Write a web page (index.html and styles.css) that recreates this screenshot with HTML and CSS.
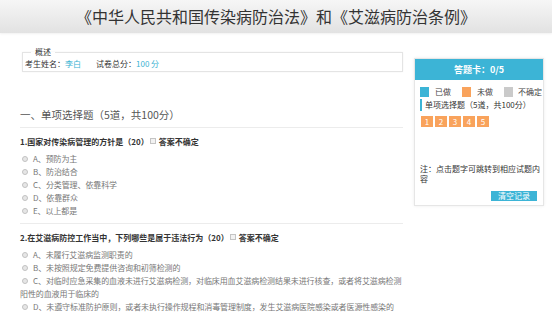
FILE: index.html
```html
<!DOCTYPE html>
<html lang="zh-CN">
<head>
    <meta charset="UTF-8">
    <meta name="viewport" content="width=device-width, initial-scale=1.0">
    <title>在线考试</title>
    <link rel="stylesheet" href="styles.css">
</head>
<body>
    <!-- 标题 -->
    <header class="top-bar">
        <h1>《中华人民共和国传染病防治法》和《艾滋病防治条例》</h1>
    </header>

    <div class="wrap">
        <main class="paper">
            <fieldset class="summary">
                <legend>概述</legend>
                <p>考生姓名：<span class="hl">李白</span><span class="spacer"></span>试卷总分：<span class="hl">100 分</span></p>
            </fieldset>

            <h2 class="section-title">一、单项选择题（5道，共100分）</h2>

            <div class="question">
                <div class="q-title">1.国家对传染病管理的方针是（20）<span class="check"></span>答案不确定</div>
                <div class="option"><span class="radio"></span>A、预防为主</div>
                <div class="option"><span class="radio"></span>B、防治结合</div>
                <div class="option"><span class="radio"></span>C、分类管理、依靠科学</div>
                <div class="option"><span class="radio"></span>D、依靠群众</div>
                <div class="option"><span class="radio"></span>E、以上都是</div>
            </div>

            <div class="question">
                <div class="q-title">2.在艾滋病防控工作当中，下列哪些是属于违法行为（20）<span class="check"></span>答案不确定</div>
                <div class="option"><span class="radio"></span>A、未履行艾滋病监测职责的</div>
                <div class="option"><span class="radio"></span>B、未按照规定免费提供咨询和初筛检测的</div>
                <div class="option"><span class="radio"></span>C、对临时应急采集的血液未进行艾滋病检测，对临床用血艾滋病检测结果未进行核查，或者将艾滋病检测阳性的血液用于临床的</div>
                <div class="option"><span class="radio"></span>D、未遵守标准防护原则，或者未执行操作规程和消毒管理制度，发生艾滋病医院感染或者医源性感染的</div>
            </div>
        </main>

        <!-- 答题卡 -->
        <aside class="card">
            <div class="card-head">答题卡：0/5</div>
            <div class="card-body">
                <div class="legend-row">
                    <span class="legend-item"><i class="sq done"></i>已做</span>
                    <span class="legend-item"><i class="sq todo"></i>未做</span>
                    <span class="legend-item"><i class="sq unsure"></i>不确定</span>
                </div>
                <div class="card-section">单项选择题（5道，共100分）</div>
                <div class="num-list">
                    <a class="num">1</a>
                    <a class="num">2</a>
                    <a class="num">3</a>
                    <a class="num">4</a>
                    <a class="num">5</a>
                </div>
                <p class="note">注：点击题字可跳转到相应试题内容</p>
                <div class="btn-row">
                    <button class="btn-clear">清空记录</button>
                </div>
            </div>
        </aside>
    </div>
</body>
</html>
```

FILE: styles.css
```css
body {
    font-family: "Noto Sans CJK SC", "Noto Sans", sans-serif;
    margin: 0;
    padding: 0;
    background-color: #fff;
    color: #333;
    font-size: 8px;
}

.top-bar {
    height: 33px;
    background: linear-gradient(#f6f6f6, #e2e2e2);
    box-shadow: 0 1px 2px rgba(0, 0, 0, 0.06);
}

.top-bar h1 {
    margin: 0;
    font-size: 16px;
    font-weight: normal;
    line-height: 33px;
    text-align: center;
    color: #333;
}

.wrap {
    display: flex;
    gap: 11px;
    padding: 0 8px 0 20px;
}

.paper {
    width: 383px;
}

.summary {
    margin: 14px 0 0 2px;
    padding: 0 2px 0 2px;
    border: 1px solid #e4e4e4;
    box-shadow: 0 0 2px rgba(0, 0, 0, 0.05);
}

.summary legend {
    margin-left: 6px;
    padding: 0 4px;
    line-height: 10px;
    color: #333;
}

.summary p {
    margin: 0;
    line-height: 14px;
    color: #333;
}

.hl {
    color: #3cb3d3;
}

.spacer {
    display: inline-block;
    width: 15px;
}

.section-title {
    margin: 36px 0 0;
    padding-bottom: 5px;
    font-size: 10.5px;
    font-weight: normal;
    line-height: 14px;
    color: #555;
    border-bottom: 1px solid #ececec;
}

.question {
    padding: 7px 0 6px;
    border-bottom: 1px solid #ececec;
}

.q-title {
    font-weight: bold;
    line-height: 14px;
    margin-bottom: 3px;
    color: #333;
}

.check {
    display: inline-block;
    width: 4px;
    height: 4px;
    margin: 0 3px 0 1px;
    border: 1px solid #c4c4c4;
    background-color: #f2f2f2;
    vertical-align: 1px;
}

.option {
    line-height: 13px;
    color: #777;
    letter-spacing: -0.1px;
}

.radio {
    display: inline-block;
    width: 4px;
    height: 4px;
    margin: 0 5px 0 2px;
    border: 1px solid #c2c2c2;
    border-radius: 50%;
    background-color: #e6e6e6;
    vertical-align: 0;
}

.card {
    align-self: flex-start;
    width: 128px;
    margin-top: 25px;
    border: 1px solid #e6e6e6;
    box-shadow: 0 0 3px rgba(0, 0, 0, 0.08);
}

.card-head {
    height: 21px;
    line-height: 21px;
    background-color: #3cb4d6;
    color: #fff;
    font-size: 9px;
    font-weight: bold;
    text-align: center;
}

.card-body {
    padding: 6px 1px 4px 5px;
}

.legend-row {
    display: flex;
    justify-content: space-between;
    line-height: 12px;
    color: #444;
}

.legend-item {
    display: flex;
    align-items: center;
}

.sq {
    display: inline-block;
    width: 9px;
    height: 10px;
    margin-right: 6px;
}

.sq.done {
    background-color: #3cb4d6;
}

.sq.todo {
    background-color: #f9a35c;
}

.sq.unsure {
    background-color: #cacaca;
    margin-right: 5px;
}

.card-section {
    margin-top: 1px;
    padding-left: 3px;
    line-height: 12px;
    border-left: 2px solid #3cb4d6;
    color: #333;
}

.num-list {
    display: flex;
    gap: 2px;
    margin-top: 5px;
    padding-left: 1px;
}

.num {
    width: 12px;
    height: 11px;
    line-height: 11px;
    background-color: #f9a35c;
    color: #fff;
    text-align: center;
}

.note {
    margin: 37px 0 0;
    line-height: 10px;
    color: #333;
}

.btn-row {
    display: flex;
    justify-content: flex-end;
    margin-top: 7px;
    padding-right: 5px;
}

.btn-clear {
    width: 46px;
    height: 10px;
    padding: 0;
    border: none;
    background-color: #3cb4d6;
    color: #fff;
    font-family: inherit;
    font-size: 8px;
    line-height: 10px;
}
```
